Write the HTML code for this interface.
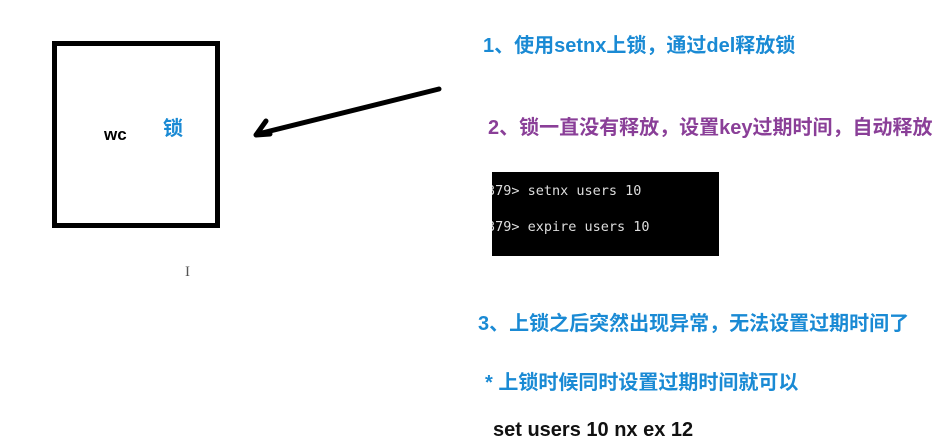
<!DOCTYPE html>
<html><head><meta charset="utf-8"><style>
body{margin:0;width:942px;height:448px;background:#fff;position:relative;overflow:hidden;font-family:"Liberation Sans","Noto Sans CJK SC",sans-serif}
.t{position:absolute;font-weight:bold;font-size:20px;white-space:nowrap;line-height:22px}
.b{color:#1a8ad4}.p{color:#8a3f98}
#box{position:absolute;left:52px;top:41px;width:158px;height:177px;border:5px solid #000}
#term{position:absolute;left:492px;top:172px;width:227px;height:84px;background:#000;color:#ddd;font-family:"DejaVu Sans Mono","Liberation Mono",monospace;font-size:13.5px;overflow:hidden}
#term div{position:absolute;left:-5px;white-space:nowrap}
</style></head><body>
<div id="box"></div>
<div class="t" style="left:104px;top:124px;font-size:17px;color:#000">wc</div>
<div class="t b" style="left:163px;top:118px;font-size:20px">锁</div>
<div style="position:absolute;left:185px;top:264px;color:#555;font-size:15px;font-family:'Liberation Serif',serif">I</div>
<svg style="position:absolute;left:0;top:0" width="942" height="448">
<path d="M439 89 L258 134 M266 121 L256 135 L270 134" stroke="#000" stroke-width="5" fill="none" stroke-linecap="round" stroke-linejoin="round"/>
</svg>
<div class="t b" style="left:483px;top:35px">1、使用setnx上锁，通过del释放锁</div>
<div class="t p" style="left:488px;top:117px">2、锁一直没有释放，设置key过期时间，自动释放</div>
<div id="term"><div style="top:11px">379&gt; setnx users 10</div><div style="top:47px">379&gt; expire users 10</div></div>
<div class="t b" style="left:478px;top:313px">3、上锁之后突然出现异常，无法设置过期时间了</div>
<div class="t b" style="left:485px;top:372px">* 上锁时候同时设置过期时间就可以</div>
<div class="t" style="left:493px;top:419px;color:#111">set users 10 nx ex 12</div>
</body></html>
